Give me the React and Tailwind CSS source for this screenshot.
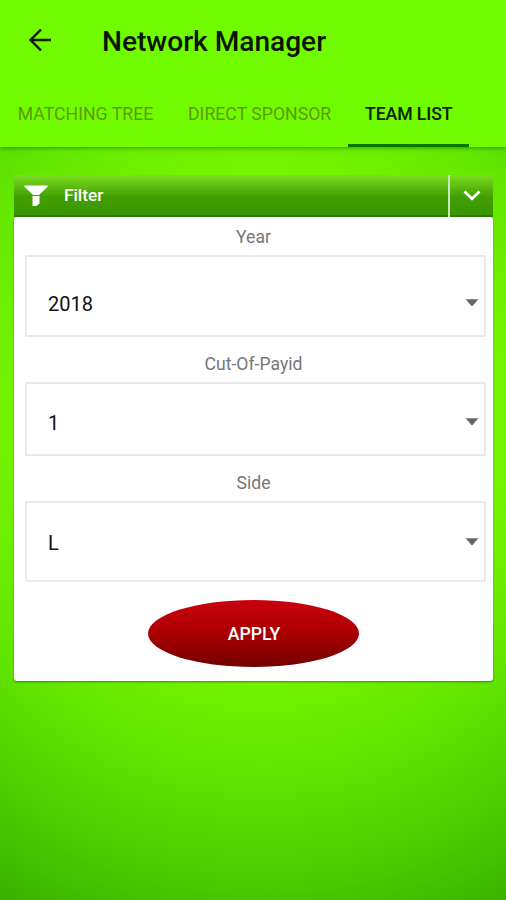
import { useState } from "react";

const tabs = [
    { name: "MATCHING TREE", width: "w-[137px]" },
    { name: "DIRECT SPONSOR", width: "w-[143px]" },
    { name: "TEAM LIST", width: "w-[87px]" },
];

function SelectField(props) {
    const { label, value, className } = props;

    return (
        <div className="flex flex-col">
            <span className="h-[38px] pr-[4px] text-center text-[17.6px] leading-[41px] text-[#777777]">{label}</span>
            <button
                className={`flex w-full justify-between rounded-[1px] border-2 border-[#e8e9e9] pl-[21px] pr-[5px] text-left text-[20px] leading-6 text-[#111111] ${className}`}>
                <span>{value}</span>
                <svg className="mt-[7px]" width="14" height="8" viewBox="0 0 14 8" fill="#666666">
                    <path d="M0.5 0.3h13L7 7.5z" />
                </svg>
            </button>
        </div>
    );
}

export default function App() {
    const [activeTab, setActiveTab] = useState("TEAM LIST");
    const [open, setOpen] = useState(true);

    return (
        <div className="flex h-[900px] w-[506px] flex-col overflow-hidden bg-[radial-gradient(ellipse_540px_560px_at_260px_420px,#7cfb00_0%,#78f700_42%,#62e600_62%,#48c900_84%,#37ae00_100%)] font-[Roboto,sans-serif]">
            <header className="h-[147px] shrink-0 bg-[#71fb00] shadow-[0_1px_4px_rgba(0,70,0,0.5)]">
                <div className="flex h-[81px] items-center pl-[28px]">
                    <button aria-label="Back" className="-mt-[2px]">
                        <svg width="24" height="24" viewBox="0 0 24 24" fill="none" stroke="#071800" strokeWidth="2.4">
                            <path d="M23 12H2.5M13 1.5L2.5 12L13 22.5" />
                        </svg>
                    </button>
                    <h1 className="ml-[50px] pt-[2px] text-[28.1px] font-medium leading-8 text-[#071500]">Network Manager</h1>
                </div>
                <nav className="flex h-[66px]">
                    {tabs.map((tab) => (
                        <button
                            key={tab.name}
                            onClick={() => setActiveTab(tab.name)}
                            className={`box-content h-[63px] whitespace-nowrap border-b-[3px] px-[17px] text-[17.7px] leading-[66px] ${tab.width} ${activeTab === tab.name ? "border-[#087700] font-medium tracking-[-0.1px] text-[#082000]" : "border-transparent text-[#5e9b00]"}`}>
                            {tab.name}
                        </button>
                    ))}
                </nav>
            </header>

            <main className="mx-[14px] mt-[28px] w-[479px]">
                <div className="flex h-[42px] border-b-2 border-[#248300] bg-linear-to-b from-[#7cdd20] via-[#429f02] via-55% to-[#399500]">
                    <div className="flex flex-1 items-start pl-[10px]">
                        <svg className="mt-[10px]" width="24" height="22" viewBox="0 0 24 22" fill="#ffffff">
                            <path d="M0.5 0.5h23v1.3L15 10H9L0.5 1.8z" />
                            <path d="M8.5 11h7v7.5L12.5 21h-4z" />
                        </svg>
                        <span className="ml-[16px] mt-[8px] text-[17.2px] font-medium leading-6 text-white">Filter</span>
                    </div>
                    <button
                        className="flex h-[42px] w-[45px] shrink-0 items-start border-l-2 border-[#c9e8bf] pl-[12px]"
                        onClick={() => setOpen(!open)}
                        aria-label="Toggle filter">
                        <svg className="mt-[14px]" width="20" height="13" viewBox="0 0 20 13" fill="none" stroke="#ffffff" strokeWidth="2.8">
                            <path d="M2.5 2.5L10 9.7L17.5 2.5" />
                        </svg>
                    </button>
                </div>
                {open && (
                    <div className="flex h-[464px] flex-col rounded-[3px] bg-white pl-[11px] pr-[7px] shadow-[0_1px_2px_rgba(0,80,0,0.6)]">
                        <SelectField label="Year" value="2018" className="h-[82px] pt-[35px]" />
                        <div className="h-[7px]" />
                        <SelectField label="Cut-Of-Payid" value="1" className="h-[74px] pt-[27px]" />
                        <div className="h-[7px]" />
                        <SelectField label="Side" value="L" className="h-[81px] pt-[28px]" />
                        <button className="mr-[4px] mt-[18px] h-[67px] w-[211px] self-center rounded-[50%] bg-linear-to-b from-[#cb000c] via-[#a90003] to-[#730000] pl-[1px] pt-[2px] text-[17.7px] font-medium text-white">
                            APPLY
                        </button>
                    </div>
                )}
            </main>
        </div>
    );
}
